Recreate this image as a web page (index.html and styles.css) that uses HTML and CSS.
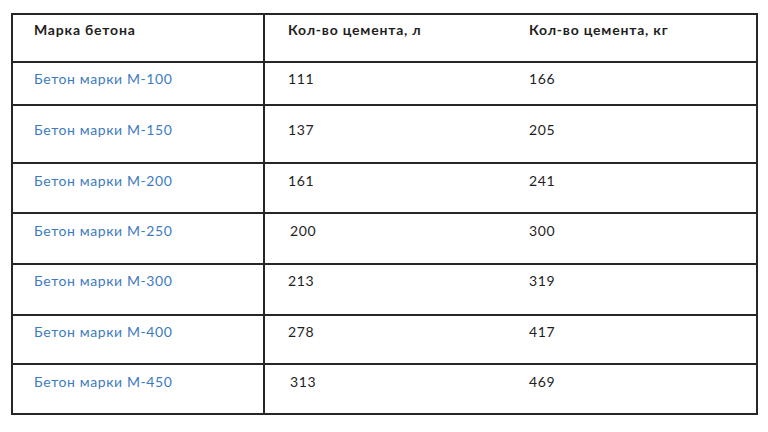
FILE: index.html
```html
<!DOCTYPE html>
<html lang="ru">
<head>
<meta charset="utf-8">
<link rel="stylesheet" href="styles.css">
</head>
<body>
<div class="table">
  <div class="row head r0">
    <div class="cell c1">Марка бетона</div>
    <div class="cell c2">Кол-во цемента, л</div>
    <div class="cell c3">Кол-во цемента, кг</div>
  </div>
  <div class="row r1">
    <div class="cell c1"><span class="link">Бетон марки М-100</span></div>
    <div class="cell c2">111</div>
    <div class="cell c3">166</div>
  </div>
  <div class="row r2">
    <div class="cell c1"><span class="link">Бетон марки М-150</span></div>
    <div class="cell c2">137</div>
    <div class="cell c3">205</div>
  </div>
  <div class="row r3">
    <div class="cell c1"><span class="link">Бетон марки М-200</span></div>
    <div class="cell c2">161</div>
    <div class="cell c3">241</div>
  </div>
  <div class="row r4">
    <div class="cell c1"><span class="link">Бетон марки М-250</span></div>
    <div class="cell c2 shift">200</div>
    <div class="cell c3">300</div>
  </div>
  <div class="row r5">
    <div class="cell c1"><span class="link">Бетон марки М-300</span></div>
    <div class="cell c2">213</div>
    <div class="cell c3">319</div>
  </div>
  <div class="row r6">
    <div class="cell c1"><span class="link">Бетон марки М-400</span></div>
    <div class="cell c2">278</div>
    <div class="cell c3">417</div>
  </div>
  <div class="row r7">
    <div class="cell c1"><span class="link">Бетон марки М-450</span></div>
    <div class="cell c2 shift">313</div>
    <div class="cell c3">469</div>
  </div>
</div>
</body>
</html>
```
FILE: styles.css
```css
* { box-sizing: border-box; }
html, body { margin: 0; padding: 0; background: #fff; }
body {
  font-family: Lato, "Open Sans", sans-serif;
  font-size: 14px;
  line-height: 16px;
  letter-spacing: 0.6px;
  color: #1e1e1e;
}
.table {
  margin: 13px 0 0 11px;
  width: 747px;
  border: 2px solid #262626;
}
.row {
  display: grid;
  grid-template-columns: 252px 242px 1fr;
  border-top: 2px solid #262626;
}
.row.head { border-top: none; height: 46px; }
.cell { padding-top: 8px; }
.c1 { padding-left: 21px; border-right: 2px solid #262626; }
.c2 { padding-left: 23px; }
.c3 { padding-left: 22px; }
.shift { padding-left: 25px; }
.head .cell { font-weight: 700; padding-top: 7px; letter-spacing: 0.8px; }
.link { color: #3d7bc0; }
.r1 { height: 43px; }
.r2 { height: 58px; }
.r2 .cell { padding-top: 16px; }
.r3 { height: 50px; }
.r3 .cell { padding-top: 9px; }
.r4 { height: 51px; }
.r4 .cell { padding-top: 9px; }
.r5 { height: 51px; }
.r6 { height: 49px; }
.r7 { height: 50px; }
.r7 .cell { padding-top: 9px; }
```
